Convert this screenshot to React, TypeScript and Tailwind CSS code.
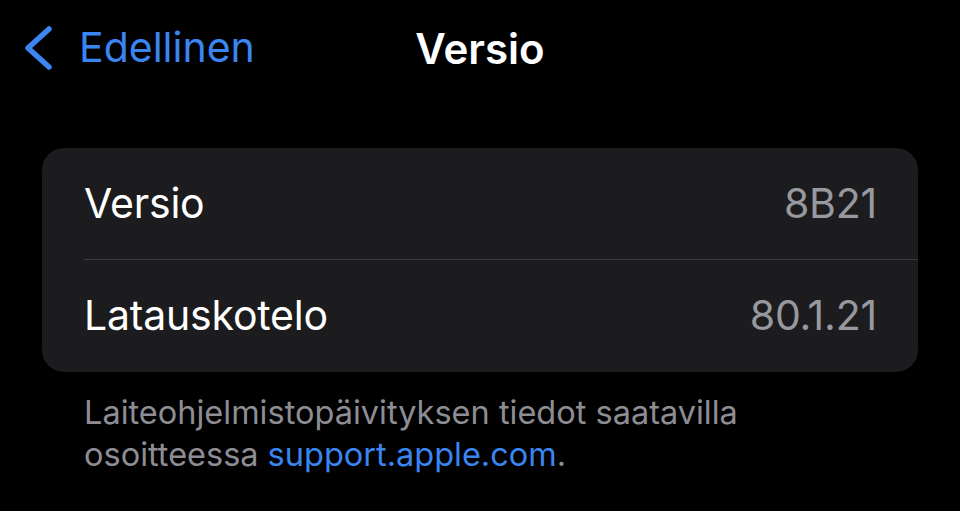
import React from 'react';

const font = { fontFamily: 'Inter, "Noto Sans", sans-serif' };

const Row = ({ label, value, divider }: { label: string; value: string; divider?: boolean }) => (
  <div className="relative flex h-[112px] items-center justify-between pl-[42px] pr-[41px]">
    <span className="text-[41px] tracking-[-0.2px] text-white">{label}</span>
    <span className="text-[41px] tracking-[-0.2px] text-[#98989f]">{value}</span>
    {divider && <div className="absolute bottom-0 left-[42px] right-0 h-px bg-[#3a3a3d]" />}
  </div>
);

export default function App() {
  return (
    <div className="h-[511px] w-[960px] overflow-hidden bg-black" style={font}>
      {/* Nav bar */}
      <div className="relative flex h-[96px] items-center">
        <button className="flex items-center pl-[22px] text-[#3a85f0]">
          <svg width="32" height="46" viewBox="0 0 32 46" fill="none">
            <path d="M27 4 L6 23 L27 42" stroke="currentColor" strokeWidth="5.5" strokeLinecap="round" strokeLinejoin="round" />
          </svg>
          <span className="ml-[25px] text-[41px]">Edellinen</span>
        </button>
        <div className="pointer-events-none absolute left-0 right-0 text-center text-[42px] font-semibold text-white">
          Versio
        </div>
      </div>

      {/* Card */}
      <div className="mx-[42px] mt-[52px] overflow-hidden rounded-[22px] bg-[#1c1c1e]">
        <Row label="Versio" value="8B21" divider />
        <Row label="Latauskotelo" value="80.1.21" />
      </div>

      {/* Footer */}
      <div className="mx-[84px] mt-[20px] text-[32.5px] leading-[42px] text-[#8d8d93]">
        <div>Laiteohjelmistopäivityksen tiedot saatavilla</div>
        <div className="flex gap-[9px]">
          <span>osoitteessa</span>
          <span className="text-[#3a85f0]">
            support.apple.com<span className="text-[#8d8d93]">.</span>
          </span>
        </div>
      </div>
    </div>
  );
}
